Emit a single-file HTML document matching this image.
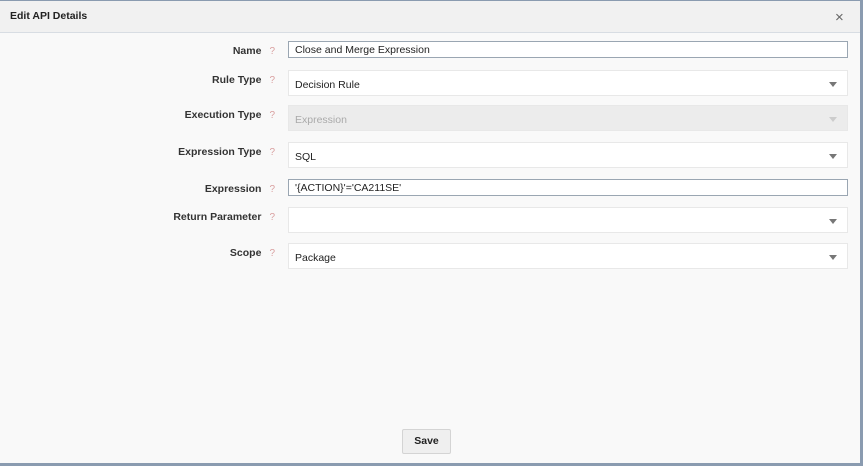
<!DOCTYPE html>
<html><head><style>
body{margin:0;width:863px;height:466px;overflow:hidden;background:#8a9bb0;font-family:"Liberation Sans",sans-serif;}
.f{position:absolute;left:0;top:1px;width:860px;height:462px;background:#f9f9f9;}
.h{position:absolute;left:0;top:0;width:860px;height:31px;background:#f1f1f1;border-bottom:1px solid #d8dde3;}
.h b{position:absolute;left:10px;top:9px;font-size:10.5px;color:#222;}
.x{position:absolute;left:835px;top:8px;font-size:15px;color:#666;}
.l{position:absolute;right:585px;font-size:10.5px;font-weight:bold;color:#333;text-align:right;white-space:nowrap}
.l i{font-style:normal;color:#d9a0a0;font-weight:normal;margin-left:8px;font-size:10px}
.in{position:absolute;left:288px;width:560px;box-sizing:border-box;font-size:10.5px;color:#222;}
.t{height:17px;border:1px solid #9aa6b2;background:#fff;padding:2px 6px;}
.s{height:26px;border:1px solid #e8e8e8;background:#fff;padding:8px 6px;}
.s:after{content:"";position:absolute;right:10px;top:11px;border:4px solid transparent;border-top:5px solid #777;}
.d{background:#ececec;color:#aaa;}
.d:after{border-top-color:#ccc}
.btn{position:absolute;left:402px;top:428px;width:49px;height:25px;box-sizing:border-box;border:1px solid #d4d4d4;background:#efefef;font-size:10.5px;font-weight:bold;text-align:center;line-height:23px;color:#222;border-radius:2px}
</style></head><body><div class="f">
<div class="h"><b>Edit API Details</b><span class="x">×</span></div>
<div class="l" style="top:44px">Name<i>?</i></div><div class="in t" style="top:40px">Close and Merge Expression</div>
<div class="l" style="top:73px">Rule Type<i>?</i></div><div class="in s" style="top:69px">Decision Rule</div>
<div class="l" style="top:108px">Execution Type<i>?</i></div><div class="in s d" style="top:104px">Expression</div>
<div class="l" style="top:145px">Expression Type<i>?</i></div><div class="in s" style="top:141px">SQL</div>
<div class="l" style="top:182px">Expression<i>?</i></div><div class="in t" style="top:178px">'{ACTION}'='CA211SE'</div>
<div class="l" style="top:210px">Return Parameter<i>?</i></div><div class="in s" style="top:206px"></div>
<div class="l" style="top:246px">Scope<i>?</i></div><div class="in s" style="top:242px">Package</div>
<div class="btn">Save</div>
</div></body></html>
